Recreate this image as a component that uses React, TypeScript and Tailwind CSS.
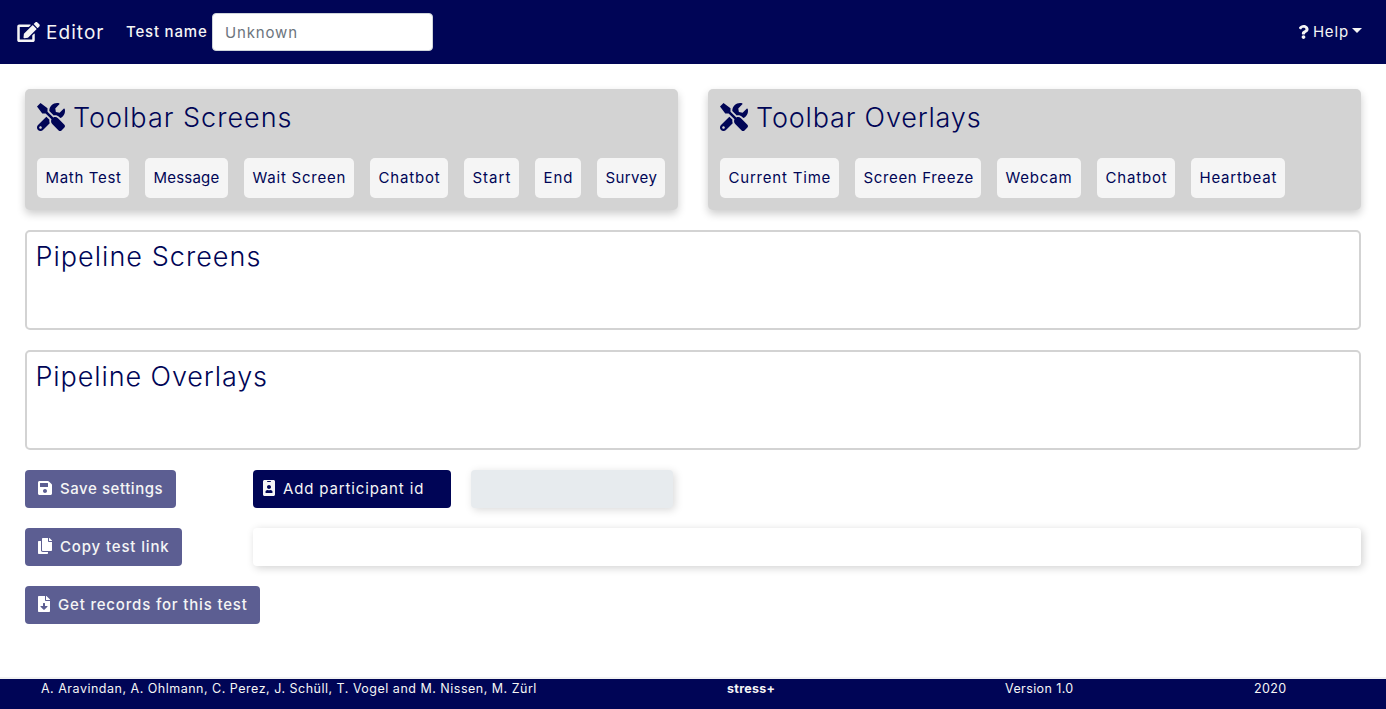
import React from 'react';
import { FaCopy, FaEdit, FaFileDownload, FaIdBadge, FaQuestion, FaSave, FaTools } from 'react-icons/fa';

type Chip = { label: string; box: string };

const screens: Chip[] = [
  { label: 'Math Test', box: 'w-[92px] tracking-[0.68px]' },
  { label: 'Message', box: 'w-[83px] tracking-[0.2px]' },
  { label: 'Wait Screen', box: 'w-[110px] tracking-[0.77px]' },
  { label: 'Chatbot', box: 'w-[78px] tracking-[0.83px]' },
  { label: 'Start', box: 'w-[55px] tracking-[1px]' },
  { label: 'End', box: 'w-[46px] tracking-[0.9px]' },
  { label: 'Survey', box: 'w-[68px] tracking-[0.4px]' },
];

const overlays: Chip[] = [
  { label: 'Current Time', box: 'w-[119px] tracking-[0.8px]' },
  { label: 'Screen Freeze', box: 'w-[126px] tracking-[0.65px]' },
  { label: 'Webcam', box: 'w-[84px] tracking-[0.8px]' },
  { label: 'Chatbot', box: 'w-[78px] tracking-[0.83px]' },
  { label: 'Heartbeat', box: 'w-[94px] tracking-[0.77px]' },
];

function Toolbar({ title, spacing, items }: { title: string; spacing: string; items: Chip[] }) {
  return (
    <section className="h-[121px] flex-1 rounded-[5px] bg-[#d3d3d3] px-3 shadow-[0_4px_8px_0_rgba(0,0,0,0.2)]">
      <h2 className="flex h-[69px] items-start gap-2 pt-[12px] text-[27px] leading-[34px] font-light">
        <FaTools className="mt-[2px] h-7 w-7 shrink-0" />
        <span className={spacing}>{title}</span>
      </h2>
      <div className="flex gap-4">
        {items.map((item) => (
          <div
            key={item.label}
            className={`flex h-10 items-center rounded-[5px] bg-[#f5f5f5] pl-[8.5px] whitespace-nowrap ${item.box}`}
          >
            {item.label}
          </div>
        ))}
      </div>
    </section>
  );
}

function Pipeline({ title, spacing }: { title: string; spacing: string }) {
  return (
    <section className="h-[100px] rounded-[5px] border-2 border-[#d3d3d3] px-[8.5px] pt-2">
      <h2 className={`text-[27px] leading-[34px] font-light ${spacing}`}>{title}</h2>
    </section>
  );
}

export default function App() {
  return (
    <div className="flex h-[709px] w-[1386px] flex-col bg-white font-['Inter',sans-serif] text-[15px] leading-6 tracking-[0.85px] text-[#000556]">
      <header className="flex h-16 items-center bg-[#000556] px-4 text-[#f5f5f5]">
        <div className="flex w-[110px] items-center gap-[6px] pl-px text-[19px] tracking-[1.05px]">
          <FaEdit className="h-5 w-[23px]" />
          <span className="pt-px">Editor</span>
        </div>
        <label className="w-[86px] font-medium tracking-[0.8px]">Test name</label>
        <input
          className="h-[38px] w-[221px] rounded border border-[#ced4da] bg-white px-3 placeholder:text-[#6c757d] placeholder:opacity-100"
          placeholder="Unknown"
        />
        <button className="ml-auto flex items-center pr-2">
          <FaQuestion className="mr-[4px] h-[14px] w-[11px]" />
          <span>Help</span>
          <span className="mb-[3px] ml-[3px] border-x-[5px] border-t-[5px] border-x-transparent border-t-[#f5f5f5]" />
        </button>
      </header>

      <main className="flex flex-1 flex-col gap-5 px-[25px] pt-[25px]">
        <div className="flex gap-[30px]">
          <Toolbar title="Toolbar Screens" spacing="tracking-[1px]" items={screens} />
          <Toolbar title="Toolbar Overlays" spacing="tracking-[0.82px]" items={overlays} />
        </div>
        <Pipeline title="Pipeline Screens" spacing="tracking-[1.03px]" />
        <Pipeline title="Pipeline Overlays" spacing="tracking-[0.9px]" />
        <div className="flex">
          <div className="w-[228px]">
            <button className="flex h-[38px] w-[151px] items-center rounded bg-[#5c5e92] pl-3 font-medium tracking-[0.56px] text-[#f5f5f5]">
              <FaSave className="mr-[7px] mb-[2px] h-4 w-4 text-white" />
              <span>Save settings</span>
            </button>
          </div>
          <button className="flex h-[38px] w-[198px] items-center rounded bg-[#000556] pl-2 text-[#f5f5f5]">
            <FaIdBadge className="mr-[6px] mb-[2px] h-4 w-4" />
            <span>Add participant id</span>
          </button>
          <div className="ml-5 h-[38px] w-[202px] rounded bg-[#e7ebee] shadow-[2px_2px_8px_rgba(0,0,0,0.15)]" />
        </div>
        <div className="flex">
          <div className="w-[228px]">
            <button className="flex h-[38px] w-[157px] items-center rounded bg-[#5c5e92] pl-3 font-medium text-[#f5f5f5]">
              <FaCopy className="mr-[7px] mb-[2px] h-4 w-4 text-white" />
              <span>Copy test link</span>
            </button>
          </div>
          <div className="h-[38px] flex-1 rounded bg-white shadow-[2px_2px_8px_rgba(0,0,0,0.18)]" />
        </div>
        <button className="flex h-[38px] w-[235px] items-center rounded bg-[#5c5e92] pl-[13px] font-medium tracking-[0.82px] text-[#f5f5f5]">
          <FaFileDownload className="mr-[8px] mb-[2px] h-4 w-3 text-white" />
          <span>Get records for this test</span>
        </button>
      </main>

      <footer className="flex h-8 border-t-2 border-[#f2f2f2] bg-[#000556] pl-[41px] text-[12.5px] leading-[19px] tracking-[0.4px] text-[#f5f5f5]">
        <span className="w-[686px] tracking-[0.5px]">
          A. Aravindan, A. Ohlmann, C. Perez, J. Schüll, T. Vogel and M. Nissen, M. Zürl
        </span>
        <b className="w-[278px] font-bold tracking-[0.3px]">stress+</b>
        <span className="w-[249px]">Version 1.0</span>
        <span>2020</span>
      </footer>
    </div>
  );
}
